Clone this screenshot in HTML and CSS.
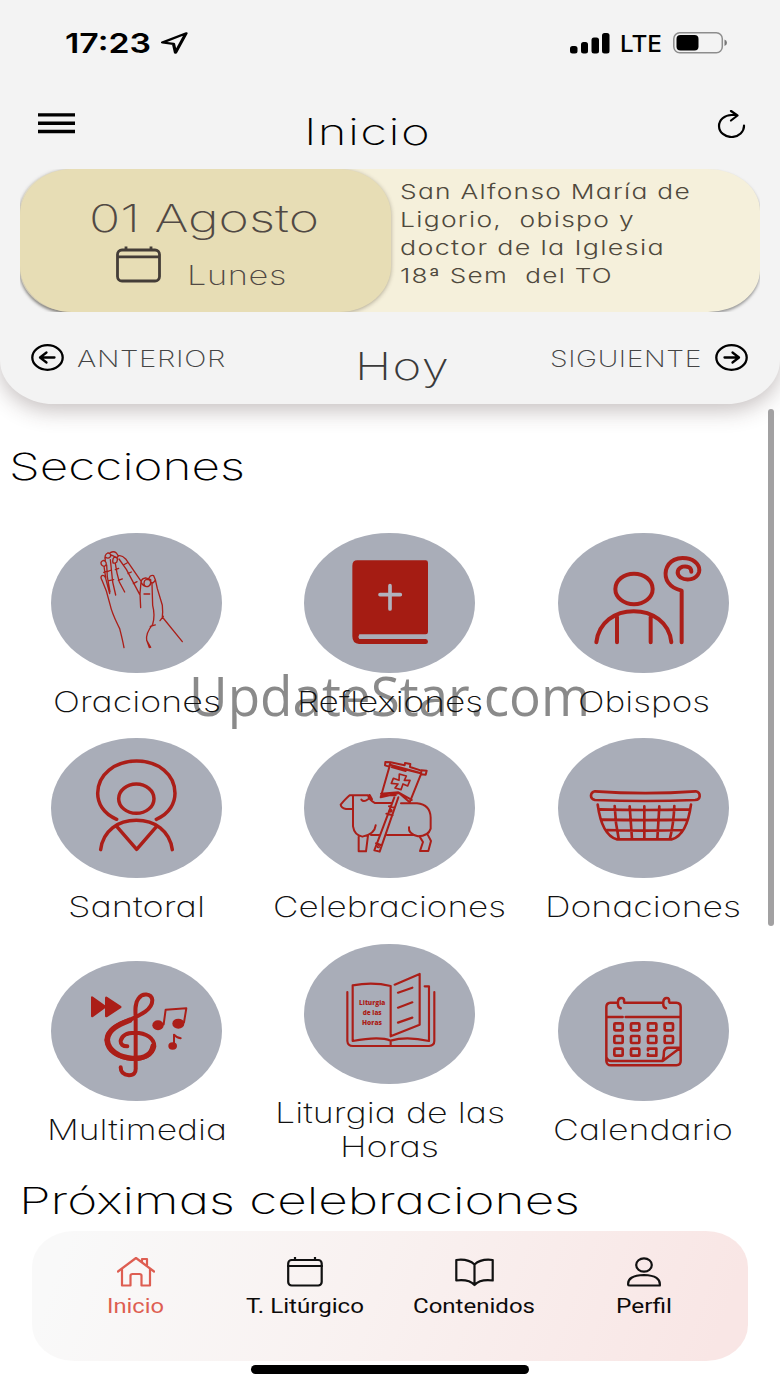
FILE: index.html
```html
<!DOCTYPE html>
<html lang="es">
<head>
<meta charset="utf-8">
<title>Inicio</title>
<link rel="stylesheet" href="styles.css">
</head>
<body>
<div class="screen">
  <header class="top">
    <div class="status">
      <svg class="txt time" width="85" height="86"><text x="-1" y="52.7" textLength="86" lengthAdjust="spacingAndGlyphs">17:23</text></svg>
      <svg class="loc" width="27" height="22" viewBox="322 97 54 65" preserveAspectRatio="none"><path d="M372 101L325 128L347 132L351 158Z"/></svg>
      <svg class="signal" width="40" height="21" viewBox="0 0 40 21"><rect x="0" y="13" width="7.5" height="7.6" rx="2.5"/><rect x="11" y="9" width="7" height="11.6" rx="2.5"/><rect x="21.500" y="4.500" width="7.5" height="16.100" rx="2.5"/><rect x="32" y="0" width="7.5" height="20.600" rx="2.5"/></svg>
      <svg class="txt lte" width="40" height="86"><text x="-1" y="52" textLength="42" lengthAdjust="spacingAndGlyphs">LTE</text></svg>
      <svg class="battery" width="55" height="22" viewBox="0 0 55 22"><rect x=".8" y=".8" width="48.500" height="20" rx="6" fill="none" stroke="#8d8d8d" stroke-width="1.500"/><rect x="3.500" y="3" width="22" height="15.500" rx="4"/><path d="M51.500 7.500q2.500 1 2.500 3.300t-2.500 3.300z" fill="#777"/></svg>
    </div>
    <div class="bar">
      <svg class="menu" width="37" height="21" viewBox="0 0 37 21"><path d="M0 1.900h37M0 10.200h37M0 18.500h37" stroke="#000" stroke-width="3.400"/></svg>
      <svg class="txt title" width="123" height="83"><text x="-3" y="58.500" textLength="127" lengthAdjust="spacingAndGlyphs">Inicio</text></svg>
      <svg class="reload" width="29" height="28" viewBox="0 0 29 28"><path d="M27 15.500a12.500 11 0 1 1-12.500-10.500H20M14 1l6.500 4.500L14 10.500" /></svg>
    </div>
    <div class="day">
      <div class="date">
        <svg class="txt dnum" width="226" height="70"><text x="-2" y="63" textLength="230" lengthAdjust="spacingAndGlyphs">01 Agosto</text></svg>
        <div class="weekday">
          <svg class="cal" width="45" height="37" viewBox="0 0 45 37"><rect x="1.500" y="4" width="42" height="31" rx="4.500"/><path d="M1.500 10.800h42M10 4V.5M35 4V.5"/></svg>
          <svg class="txt wd" width="97" height="48"><text x="-1" y="45.500" textLength="100" lengthAdjust="spacingAndGlyphs">Lunes</text></svg>
        </div>
      </div>
      <svg class="txt feast" width="340" height="143">
        <text x="9" y="30" textLength="291" lengthAdjust="spacingAndGlyphs">San Alfonso María de</text>
        <text x="9" y="58" textLength="235" lengthAdjust="spacingAndGlyphs">Ligorio,&#160; obispo y</text>
        <text x="9" y="86" textLength="265" lengthAdjust="spacingAndGlyphs">doctor de la Iglesia</text>
        <text x="9" y="114" textLength="213" lengthAdjust="spacingAndGlyphs">18ª Sem&#160; del TO</text>
      </svg>
    </div>
    <div class="pager">
      <svg class="arrow" width="33" height="27" viewBox="0 0 33 27"><ellipse cx="16.500" cy="13.500" rx="15.200" ry="12.300"/><path d="M23.500 13.500H9.500M15.500 8.500L9 13.500l6.500 5"/></svg>
      <svg class="txt step" width="147" height="92"><text x="-1" y="55" textLength="149" lengthAdjust="spacingAndGlyphs">ANTERIOR</text></svg>
      <svg class="txt today" width="90" height="92"><text x="-3" y="68" textLength="95" lengthAdjust="spacingAndGlyphs">Hoy</text></svg>
      <svg class="txt step" width="149" height="92"><text x="-1" y="55" textLength="152" lengthAdjust="spacingAndGlyphs">SIGUIENTE</text></svg>
      <svg class="arrow" width="33" height="27" viewBox="0 0 33 27"><ellipse cx="16.500" cy="13.500" rx="15.200" ry="12.300"/><path d="M9.500 13.500h14M17.500 8.500l6.500 5-6.500 5"/></svg>
    </div>
  </header>

  <main>
    <svg class="txt heading" width="760" height="119"><text x="9" y="76" textLength="236" lengthAdjust="spacingAndGlyphs">Secciones</text></svg>
    <div class="grid">
      <div class="item">
        <svg class="disc" viewBox="34 38 513 421"><g stroke-width="4">
          <path d="M253 382C249 360 245 345 240 325C228 300 217 280 211 252L200 212L187 180Q181 170 187 166Q193 163 198 174L210 220M198 172L193 138Q183 135 184 126Q189 117 197 123Q204 132 194 138M201 134L203 170L211 215M197 120Q193 103 204 98Q213 97 213 108Q206 118 197 110M212 118L219 185L228 224M212 97Q222 91 230 98L236 107L231 113Q220 106 212 103M220 128Q217 111 227 110Q237 112 231 126Q224 131 220 126M227 130Q231 160 239 185L255 215M235 107Q246 103 258 116L305 184M238 116L260 147L300 222M303 262L301 220L304 185Q306 174 318 173L333 178Q336 195 324 199Q310 199 306 188M313 190Q313 178 322 177Q333 177 333 188Q330 199 321 199Q313 198 313 190M328 173Q332 163 342 166L347 178Q342 190 335 187M337 190L339 255Q347 285 339 312Q318 338 321 360L333 381M347 178L353 205L368 255Q370 276 368 290L428 364M361 301L371 288M332 318L347 314M322 362L329 382M313 221h17M192 156l9-3M203 154l12-5M208 181l14-3M227 148l10-4M236 180l12-4M251 134l11-6M265 160l10-5M281 190l11-6"/>
        </g></svg>
        <svg class="txt label" width="240" height="46"><text x="36" y="38.700" textLength="168" lengthAdjust="spacingAndGlyphs">Oraciones</text></svg>
      </div>
      <div class="item">
        <svg class="disc" viewBox="43 38 513 421"><path d="M203 120H408Q415 120 415 127V335Q415 342 408 342H209Q204 349 209 356H408Q415 357 415 364Q415 371 408 371H208Q188 370 188 348V136Q188 120 203 120Z" fill="#a51c13" stroke="none"/><path d="M301 196V266M271 223H332" stroke="#b1b3be" stroke-width="11"/></svg>
        <svg class="txt label" width="240" height="46"><text x="27" y="38.700" textLength="186" lengthAdjust="spacingAndGlyphs">Reflexiones</text></svg>
      </div>
      <div class="item">
        <svg class="disc" viewBox="38 38 513 421"><g stroke-width="12"><ellipse cx="266" cy="206" rx="56" ry="46"/><path d="M153 366C160 305 210 273 265 273S372 305 378 366M215 290V366M316 290V366M409 366V211C371 202 356 177 362 149C371 119 398 110 423 114C451 118 466 138 461 156C453 178 424 183 405 171C391 158 397 144 412 139C427 136 438 142 438 154"/></g></svg>
        <svg class="txt label" width="240" height="46"><text x="55" y="38.700" textLength="132" lengthAdjust="spacingAndGlyphs">Obispos</text></svg>
      </div>
      <div class="item">
        <svg class="disc" viewBox="34 24 513 421"><g stroke-width="10.500"><ellipse cx="290" cy="206" rx="53" ry="44"/><path d="M231 268C190 251 174 219 174 190C174 133 226 93 291 93S406 133 406 190C406 219 390 251 350 268M183 359C190 302 235 271 290 271S390 302 398 359M231 289L291 358L351 289"/></g></svg>
        <svg class="txt label" width="240" height="46"><text x="51" y="38.700" textLength="137" lengthAdjust="spacingAndGlyphs">Santoral</text></svg>
      </div>
      <div class="item">
        <svg class="disc" viewBox="43 24 513 421"><g stroke-width="6"><path d="M187 237H169Q154 234 153 224Q169 205 180 196H235Q238 209 255 219H307M334 220H382Q422 224 423 263V296Q416 319 385 319Q355 311 358 292M190 198V289Q194 315 218 320Q255 313 258 286M240 195L247 208M235 208Q222 218 215 209M207 320V364H229L235 316M244 315H268M292 315H375M390 320L400 336L391 363H416L424 333L414 314M314 202L254 361L270 365L326 202M259 340L275 346M290 251L309 256M298 229L314 233"/><path d="M301 104L395 130L360 217L328 189L273 202ZM274 191L326 187L366 210M287 96L303 97L298 110L286 106ZM395 121L411 122L408 134L394 133ZM303 97L345 106L346 99L362 102L361 111L395 122M306 111L348 123M351 119L390 129M276 196L318 196"/><path stroke-width="5" d="M329 132L350 138L344 151L361 151L354 168L340 162L334 179L316 174L325 162L305 160L311 145L328 151Z"/><circle cx="303" cy="242" r="3"/><circle cx="266" cy="350" r="2"/></g></svg>
        <svg class="txt label" width="240" height="46"><text x="3" y="38.700" textLength="233" lengthAdjust="spacingAndGlyphs">Celebraciones</text></svg>
      </div>
      <div class="item">
        <svg class="disc" viewBox="38 24 513 421"><g stroke-width="8"><path d="M149 184Q300 195 451 184Q464 187 463 199Q462 209 449 210Q300 216 149 210Q137 207 137 197Q137 187 149 184Z"/><path d="M157 224C163 268 179 318 214 328H380C415 318 431 268 437 224M208 228Q210 280 220 326M253 229L260 327M297 229V327M342 229L336 327M387 228Q385 280 374 326M164 238Q300 242 434 238M170 269Q300 272 426 269M185 300Q300 304 412 300"/></g></svg>
        <svg class="txt label" width="240" height="46"><text x="22" y="38.700" textLength="196" lengthAdjust="spacingAndGlyphs">Donaciones</text></svg>
      </div>
      <div class="item">
        <svg class="disc" viewBox="34 62 513 421"><path class="fill" d="M154 171Q155 166 160 169L196 195V172Q198 167 203 170L244 197Q248 200 244 203L203 230Q197 233 196 228V204L160 230Q154 232 154 227Z"/><g stroke-width="12"><path d="M263 318Q242 318 243 301C248 281 266 277 285 277C321 277 344 295 344 318C339 345 311 357 278 356C235 353 203 333 200 300C201 268 232 252 267 240C305 223 338 208 338 179C335 158 307 158 297 174C283 192 288 216 288 237V381Q290 405 268 405Q243 403 243 381" /><path d="M340 318C336 343 312 355 278 354C237 351 205 330 203 298C206 266 238 253 270 240" stroke-width="16"/></g><g stroke-width="6"><path d="M372 252L378 208L440 204L433 246M403 315L403 283Q409 291 423 294"/></g><g class="fill"><ellipse cx="355" cy="255" rx="17" ry="15"/><ellipse cx="416" cy="250" rx="18" ry="15"/><ellipse cx="399" cy="317" rx="13" ry="11"/></g></svg>
        <svg class="txt label" width="240" height="46"><text x="30" y="38.700" textLength="180" lengthAdjust="spacingAndGlyphs">Multimedia</text></svg>
      </div>
      <div class="item">
        <svg class="disc" viewBox="43 9 513 421"><g stroke-width="6.500"><path d="M173 153V300Q174 315 190 315H418Q434 314 434 300V153M189 133Q250 122 303 135V286M189 133V300Q270 285 303 299Q350 285 418 300V136H405M303 299V315M315 131L390 99V251L303 286M325 155L368 140M325 200L368 184M325 245L368 230"/></g><g class="book"><text x="208" y="191" textLength="79" lengthAdjust="spacingAndGlyphs">Liturgia</text><text x="219" y="222" textLength="57" lengthAdjust="spacingAndGlyphs">de las</text><text x="217" y="252" textLength="60" lengthAdjust="spacingAndGlyphs">Horas</text></g></svg>
        <svg class="txt label" width="240" height="80"><text x="5" y="38.700" textLength="230" lengthAdjust="spacingAndGlyphs">Liturgia de las</text><text x="70" y="73.200" textLength="99" lengthAdjust="spacingAndGlyphs">Horas</text></svg>
      </div>
      <div class="item">
        <svg class="disc" viewBox="803 62 513 421"><g stroke-width="7.5"><path d="M983 187H960Q948 188 948 200V362Q949 375 962 375H1158Q1171 374 1171 362V200Q1171 188 1158 187H1138M1002 187H1118M950 230H997M1006 230H1169M950 354Q952 361 962 362H1117L1170 322M1117 362Q1121 350 1121 333Q1123 322 1134 322H1170M991 204Q981 202 983 184Q984 173 993 173Q1003 173 1001 184M1127 204Q1117 202 1119 184Q1120 173 1129 173Q1138 173 1136 184"/></g><g stroke-width="8"><rect x="972" y="249" width="25" height="21" rx="3"/><rect x="1022" y="249" width="25" height="21" rx="3"/><rect x="1073" y="249" width="25" height="21" rx="3"/><rect x="1123" y="249" width="25" height="21" rx="3"/><rect x="972" y="287" width="25" height="21" rx="3"/><rect x="1022" y="287" width="25" height="21" rx="3"/><rect x="1073" y="287" width="25" height="21" rx="3"/><rect x="1123" y="287" width="25" height="21" rx="3"/><rect x="972" y="325" width="25" height="21" rx="3"/><rect x="1022" y="325" width="25" height="21" rx="3"/><path d="M1073 330V325H1098V346H1073V341"/></g></svg>
        <svg class="txt label" width="240" height="46"><text x="30" y="38.700" textLength="180" lengthAdjust="spacingAndGlyphs">Calendario</text></svg>
      </div>
    </div>
    <svg class="txt next" width="760" height="53"><text x="19" y="40" textLength="561" lengthAdjust="spacingAndGlyphs">Próximas celebraciones</text></svg>
  </main>

  <nav class="tabs">
    <div class="tab on">
      <svg class="ico" width="38" height="30" viewBox="0 0 38 30"><path d="M1 14.500L19 1l18 13.500M5 12V28.500H13.500V18.500Q13.500 17 15.500 17H22.500Q24.500 17 24.500 18.500V28.500H33V12M25 5V2H30V9"/></svg>
      <svg class="txt" width="56" height="34"><text x="-1" y="26" textLength="57" lengthAdjust="spacingAndGlyphs">Inicio</text></svg>
    </div>
    <div class="tab">
      <svg class="ico" width="36" height="30" viewBox="0 0 36 30"><rect x="1.200" y="3" width="33.500" height="25.500" rx="3.500"/><path d="M1 9h34M8 3V0M28 3V0"/></svg>
      <svg class="txt" width="117" height="34"><text x="0" y="26" textLength="118" lengthAdjust="spacingAndGlyphs">T. Litúrgico</text></svg>
    </div>
    <div class="tab">
      <svg class="ico" width="39" height="30" viewBox="0 0 39 30"><path d="M19.500 7.500Q13 1.500 1.300 3V23.500Q14 22 19.500 28Q25 22 37.700 23.500V3Q26 1.500 19.500 7.500V28"/></svg>
      <svg class="txt" width="121" height="34"><text x="-1" y="26" textLength="122" lengthAdjust="spacingAndGlyphs">Contenidos</text></svg>
    </div>
    <div class="tab">
      <svg class="ico" width="34" height="30" viewBox="0 0 34 30"><ellipse cx="17" cy="8" rx="7.800" ry="6.700"/><path d="M1.200 28Q0 18.500 17 18Q34 18.500 32.800 28.500H3Q1.200 28.500 1.200 28Z"/></svg>
      <svg class="txt" width="54" height="34"><text x="-1" y="26" textLength="56" lengthAdjust="spacingAndGlyphs">Perfil</text></svg>
    </div>
  </nav>
  <div class="home"></div>

  <svg class="mark" width="400" height="70"><text x="-5" y="47" textLength="401" lengthAdjust="spacingAndGlyphs">UpdateStar.com</text></svg>
  <div class="scroll"></div>
</div>
</body>
</html>
```
FILE: styles.css
```css
* { box-sizing: border-box; }
body { margin: 0; background: #fff; font-family: Inter, "Open Sans", sans-serif; }
svg { display: block; flex: none; }
.screen { position: relative; width: 780px; height: 1387px; overflow: hidden; background: #fff; display: flex; flex-direction: column; }

.txt { overflow: visible; font-weight: 200; font-feature-settings: "cv11"; fill: #111; }

.top { height: 404px; flex: none; background: #f3f3f3; border-radius: 0 0 54px 54px / 0 0 44px 44px; box-shadow: 0 6px 22px rgba(60, 40, 40, .3); }
.status { height: 86px; display: flex; align-items: center; padding: 0 52px 0 66px; }
.time { font-size: 27.5px; font-weight: 600; fill: #000; }
.loc { margin-left: 10px; fill: none; stroke: #000; stroke-width: 6.500; stroke-linejoin: round; }
.signal { margin-left: auto; }
.lte { margin-left: 11px; font-size: 23px; font-weight: 500; fill: #000; }
.battery { margin-left: 12px; }
.bar { height: 83px; display: flex; padding: 0 34px 0 38px; }
.menu { margin-top: 27px; }
.title { font-size: 36.5px; letter-spacing: 1px; margin-left: 232px; fill: #000; }
.reload { margin-top: 24px; margin-left: auto; fill: none; stroke: #000; stroke-width: 2.2; stroke-linecap: round; stroke-linejoin: round; }

.day { height: 143px; margin: 0 20px; display: flex; background: #f5f0db; border-radius: 52px / 42px; box-shadow: 0 2px 3px rgba(60, 60, 60, .5); clip-path: inset(0); }
.date { width: 371px; display: flex; flex-direction: column; align-items: center; background: #e7ddb5; border-radius: 52px / 46px; box-shadow: 0 1px 4px rgba(90, 80, 60, .45); padding-right: 3px; }
.date .txt { font-weight: 250; fill: #514944; }
.dnum { font-size: 38px; }
.weekday { display: flex; gap: 27px; margin-left: -7px; }
.cal { margin-top: 7px; fill: none; stroke: #443d38; stroke-width: 2.8; }
.wd { font-size: 27px; letter-spacing: .5px; }
.feast { font-size: 20.5px; font-weight: 300; letter-spacing: 1px; fill: #4f493d; }

.pager { height: 92px; display: flex; align-items: flex-start; padding: 0 32px 0 31px; }
.arrow { margin-top: 32px; fill: none; stroke: #000; stroke-width: 2.3; stroke-linecap: round; stroke-linejoin: round; }
.step { font-size: 22.5px; font-weight: 200; letter-spacing: .5px; fill: #444; margin-left: 14px; }
.today { font-size: 38px; letter-spacing: 1px; font-weight: 250; fill: #3a3a3a; margin-left: 133px; }
.today + .step { margin-left: 103px; }
.pager .arrow:last-child { margin-left: auto; }

main { height: 827px; flex: none; position: relative; z-index: 1; }
.heading { font-size: 37px; fill: #000; }
.grid { display: grid; grid-template-columns: repeat(3, 253.400px); grid-template-rows: 205.500px 205.500px 240px; justify-content: center; align-items: center; }
.item { display: flex; flex-direction: column; align-items: center; }
.disc { width: 171px; height: 140.300px; border-radius: 50%; background: #a9adb8; fill: none; stroke: #ab1e18; stroke-linecap: round; stroke-linejoin: round; }
.disc .fill { fill: #ab1e18; stroke: none; }
.book { fill: #ab1e18; stroke: none; font: 800 23px "Open Sans", sans-serif; }
.label { font-size: 28px; }
.next { font-size: 37px; fill: #000; }

.tabs { width: 716px; height: 130px; flex: none; margin: 0 32px; padding: 26px 20px 0 19px; border-radius: 42px / 36px; background: linear-gradient(110deg, #f9f9f9 5%, #f9f1f0 48%, #f9e6e5 95%); display: grid; grid-template-columns: repeat(4, 169.300px); }
.tab { display: flex; flex-direction: column; align-items: center; }
.tab .txt { font: 400 20px Roboto, sans-serif; fill: #0c0a0a; }
.ico { fill: none; stroke: #111; stroke-width: 2.2; stroke-linejoin: round; stroke-linecap: round; }
.tab.on .ico { stroke: #de5e52; }
.tab.on .txt { fill: #de5e52; }
.home { width: 278px; height: 9px; margin: 4px 0 0 251px; border-radius: 5px; background: #000; }

.mark { position: absolute; left: 194px; top: 669px; font: 400 54px "Open Sans", sans-serif; fill: #8a8a8a; overflow: visible; }
.scroll { position: absolute; z-index: 2; left: 768px; top: 409px; width: 6px; height: 517px; border-radius: 3px; background: #a2a1a2; }
```
